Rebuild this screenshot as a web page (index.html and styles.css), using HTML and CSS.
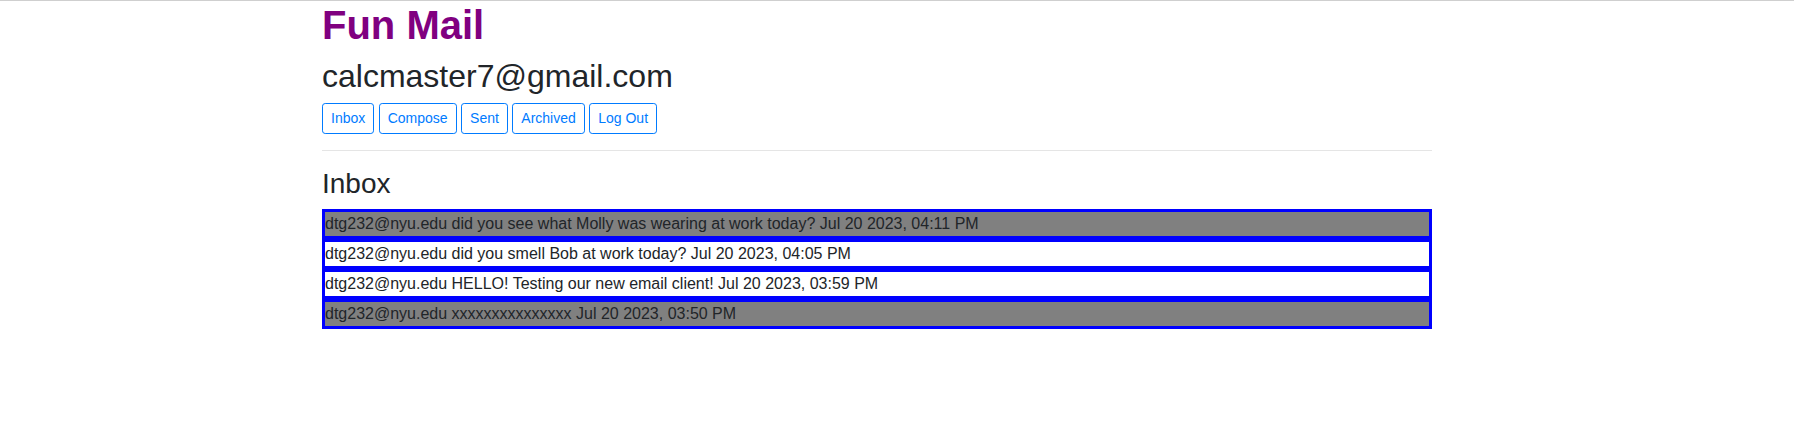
FILE: index.html
```html
<!DOCTYPE html>
<html lang="en">
<head>
<meta charset="utf-8">
<title>Fun Mail</title>
<link rel="stylesheet" href="styles.css">
</head>
<body>
<div class="page">
  <div class="container">
    <h1 class="brand">Fun Mail</h1>
    <h2 class="user">calcmaster7@gmail.com</h2>
    <nav class="nav">
      <button class="btn">Inbox</button>
      <button class="btn">Compose</button>
      <button class="btn">Sent</button>
      <button class="btn">Archived</button>
      <button class="btn">Log Out</button>
    </nav>
    <hr class="rule">
    <h3 class="mailbox">Inbox</h3>
    <div class="emails">
      <div class="email read">dtg232@nyu.edu did you see what Molly was wearing at work today? Jul 20 2023, 04:11 PM</div>
      <div class="email">dtg232@nyu.edu did you smell Bob at work today? Jul 20 2023, 04:05 PM</div>
      <div class="email">dtg232@nyu.edu HELLO! Testing our new email client! Jul 20 2023, 03:59 PM</div>
      <div class="email read">dtg232@nyu.edu xxxxxxxxxxxxxxx Jul 20 2023, 03:50 PM</div>
    </div>
  </div>
</div>
</body>
</html>
```
FILE: styles.css
```css
html, body {
  margin: 0;
  padding: 0;
}
body {
  border-top: 1px solid #cfcfcf;
  font-family: "Liberation Sans", Arial, sans-serif;
  font-size: 16px;
  line-height: 1.5;
  color: #212529;
  background: #fff;
}
.page {
  width: 1754px;
}
.container {
  max-width: 1110px;
  margin: 0 auto;
  padding: 0 15px;
}
.brand {
  margin: 0 0 8px;
  font-size: 40px;
  line-height: 1.2;
  font-weight: 700;
  color: #800080;
}
.user {
  margin: 0 0 8px;
  font-size: 32px;
  line-height: 1.2;
  font-weight: 400;
}
.nav {
  display: flex;
  gap: 4.45px;
}
.btn {
  font-family: "Liberation Sans", Arial, sans-serif;
  font-size: 14px;
  line-height: 21px;
  padding: 4px 8px;
  color: #007bff;
  background: transparent;
  border: 1px solid #007bff;
  border-radius: 3.2px;
  margin: 0;
}
.rule {
  margin: 16px 0;
  border: 0;
  border-top: 1px solid rgba(0, 0, 0, 0.1);
}
.mailbox {
  margin: 0 0 8px;
  font-size: 28px;
  line-height: 1.2;
  font-weight: 400;
}
.emails {
  display: flex;
  flex-direction: column;
}
.email {
  border: 3px solid #0000ff;
  background: #fff;
  line-height: 24px;
  white-space: nowrap;
}
.email.read {
  background: #808080;
}
```
